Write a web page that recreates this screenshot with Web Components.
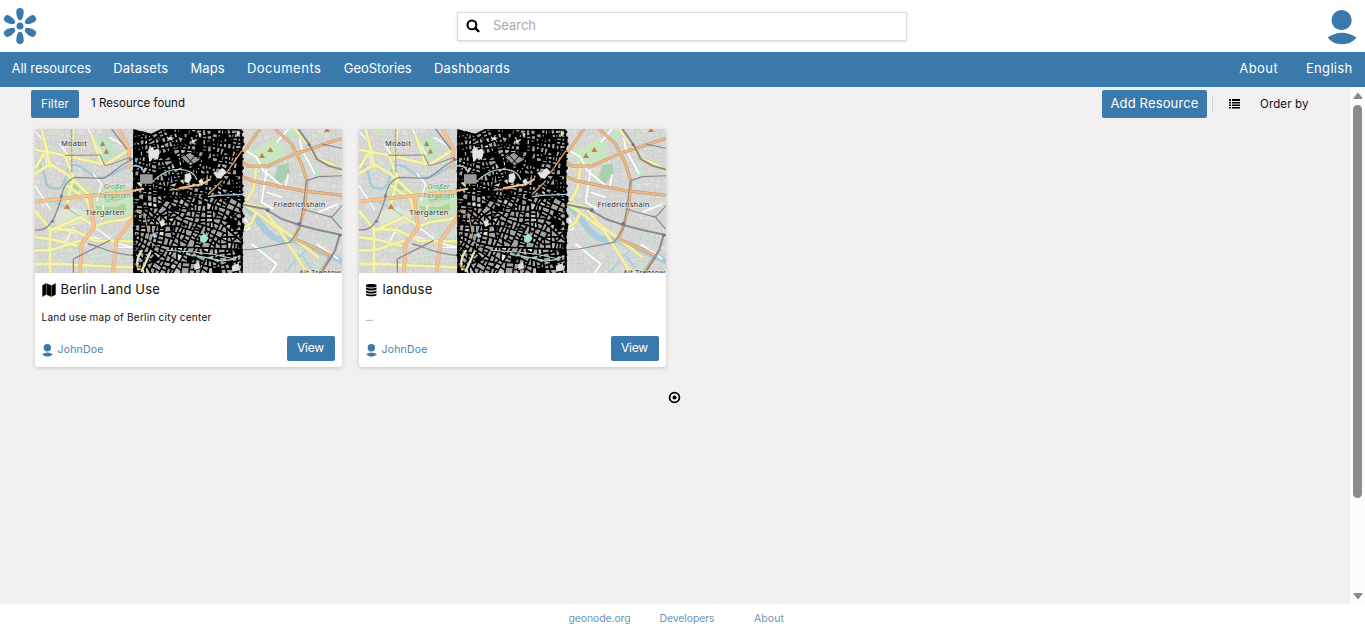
<!DOCTYPE html>
<html lang="en">
<head>
<meta charset="utf-8">
<title>GeoNode</title>
<style>
html,body{margin:0;height:100%;overflow:hidden;background:#fff}
body{font-family:Inter,"Open Sans",sans-serif;font-size:13px;color:#111}
</style>
</head>
<body>
<geo-app></geo-app>
<script>
const define = (name, html, setup) => {
  const t = document.createElement('template');
  t.innerHTML = html;
  customElements.define(name, class extends HTMLElement {
    constructor() {
      super();
      this.attachShadow({mode: 'open'}).append(t.content.cloneNode(true));
    }
    connectedCallback() { if (setup) setup(this, this.shadowRoot); }
  });
};

/* One-line label of a given width: tracking is spread evenly over its letters. */
define('fit-text', `<style>
:host{display:inline-block;white-space:nowrap;overflow:visible;line-height:1.2}
span{display:inline-block}
</style><span><slot></slot></span>`, (el, root) => {
  const w = +el.getAttribute('w'), s = root.querySelector('span');
  el.style.width = w + 'px';
  s.style.letterSpacing = '0px';
  const n = el.textContent.length;
  s.style.letterSpacing = ((w - s.getBoundingClientRect().width) / n) + 'px';
});

define('user-icon', `<style>:host{display:block}svg{display:block;width:100%;height:100%}</style>
<svg viewBox="0 0 30 35" fill="#3a79ab"><circle cx="14.6" cy="10.2" r="10.1"/><path d="M.6 27.6Q14.800 17.800 29.600 27.600Q24.500 34.300 15 34.300Q5.500 34.300 .6 27.600Z"/></svg>`);

define('geo-logo', `<style>:host{display:block;width:36px;height:38px}svg{display:block}</style>
<svg width="36" height="38" viewBox="-18 -19 36 38" fill="#3a79ab"><circle r="3.5"/>
<path id="a" d="M0-5.800C-2.600-5.800-3.700-11-3.700-14.300A3.700 3.700 0 0 1 3.700-14.300C3.700-11 2.600-5.800 0-5.800Z"/>
<use href="#a" transform="rotate(60)"/><use href="#a" transform="rotate(120)"/><use href="#a" transform="rotate(180)"/><use href="#a" transform="rotate(240)"/><use href="#a" transform="rotate(300)"/></svg>`);

define('search-box', `<style>
:host{display:flex;align-items:center;box-sizing:border-box;width:450px;height:29px;background:#fff;border:1px solid #dadada;box-shadow:0 1px 3px rgba(0,0,0,.12);padding-left:8px;color:#a9a9a9;font-size:13px}
svg{width:14px;height:14px;margin-right:13px}
</style><svg viewBox="0 0 14 14" fill="none" stroke="#000"><circle cx="5.900" cy="5.900" r="4.400" stroke-width="2.100"/><path d="M9.300 9.200l3 3" stroke-width="2.500" stroke-linecap="round"/></svg>
<fit-text w="43">Search</fit-text>`);

define('top-bar', `<style>
:host{display:flex;align-items:center;justify-content:space-between;height:52px;background:#fff;padding:0 8px 0 2px}
user-icon{width:30px;height:35px;margin-top:2px}
.l,.r{flex:1}.r{display:flex;justify-content:flex-end}
.l{padding-right:5px}
</style><div class="l"><geo-logo></geo-logo></div><search-box></search-box><div class="r"><user-icon></user-icon></div>`);

define('nav-bar', `<style>
:host{display:flex;align-items:center;height:35px;background:#3a79ab;color:#fff;padding:0 12.500px 1px 11.500px;box-sizing:border-box;gap:22.300px;font-size:13px}
.s{flex:1}.e{margin-left:5.500px}
</style><fit-text w="79.500">All resources</fit-text><fit-text w="55">Datasets</fit-text><fit-text w="34">Maps</fit-text><fit-text w="74.500">Documents</fit-text><fit-text w="68">GeoStories</fit-text><fit-text w="76">Dashboards</fit-text><span class="s"></span><fit-text w="39">About</fit-text><fit-text class="e" w="46.500">English</fit-text>`);

define('geo-button', `<style>
:host{display:flex;align-items:center;justify-content:center;background:#3a79ab;color:#fff;border-radius:2px;box-sizing:border-box;height:28px}
</style><slot></slot>`);

define('tool-bar', `<style>
:host{display:flex;align-items:center;padding:3px 41.500px 0 31px;height:28px;font-size:11.500px}
.f{width:48px}.f fit-text,.o{margin-top:1px}.n{margin:-1px 0 0 12px}.s{flex:1}
.a{width:105px;font-size:13px}.d{width:1px;height:18px;background:#d8d6d7;margin:0 16px 0 5px}
svg{margin-right:20px}
</style><geo-button class="f"><fit-text w="28">Filter</fit-text></geo-button><fit-text class="n" w="94">1 Resource found</fit-text><span class="s"></span>
<geo-button class="a"><fit-text w="88">Add Resource</fit-text></geo-button><span class="d"></span>
<svg width="11" height="10" viewBox="0 0 11 10" fill="#000"><path d="M0 0h2v2H0zM3 0h8v2H3zM0 3h2v1.500H0zM3 3h8v1.500H3zM0 5.500h2V7H0zM3 5.500h8V7H3zM0 8h2v1.500H0zM3 8h8v1.500H3z"/></svg>
<fit-text class="o" w="48.500">Order by</fit-text>`);

/* Berlin map thumbnail: drawn roads and parks, generated street blocks. */
define('berlin-map', `<style>:host{display:block;height:144px;overflow:hidden}svg{display:block;font-family:"Noto Sans",sans-serif}</style>
<svg width="308" height="144" viewBox="0 0 308 144">
<rect width="308" height="144" fill="#dadad8"/><g id="blocks"></g>
<g transform="translate(-5 -5) scale(.33333)" fill="none" stroke-linejoin="round" stroke-linecap="round">
 <g fill="#c9e3bd"><path d="M95 172L135 165L185 200L300 190L320 225L306 270L230 285L185 275L165 220L110 238L95 220Z"/><path d="M190 45L238 40L258 88L225 110L205 95Z" fill="#bee4c5"/><path d="M75 262L130 250L175 268L165 300L80 308Z" fill="#dfe6d2"/><path d="M60 15l36 0 0 18-36 0Z" fill="#cfe2c8"/></g>
 <g fill="#afd4a4"><path d="M108 188l22-16 20 22-18 14zM215 212l65-8 10 20-60 12zM195 246l60 4 30-12 5 20-80 14z"/></g>
 <g fill="#bce6ca"><path d="M205 52h10v10h-10zM222 72h12v10h-12zM232 54h9v10h-9zM212 86h9v9h-9z"/><path d="M100 130h12v10h-12zM28 340h14v10h-14zM60 415h16v12h-16zM105 355h10v12h-10zM250 320h12v10h-12zM55 232h10v16h-10zM268 108h14v12h-14zM215 380h12v12h-12z"/></g>
 <g stroke="#a5c9d6" stroke-width="7"><path d="M20 115C60 150 35 180 60 190S100 195 110 150S150 125 175 145S220 165 250 150S290 120 310 125"/><path d="M75 235C100 240 130 265 180 300" stroke-width="3.500"/></g>
 <g stroke="#fff" stroke-width="4"><path d="M18 25L45 55L50 120M175 15l40 75M190 150l25 30-15 50M15 185L60 255M240 40l50 30M220 245l-5 40M260 370h60M190 305l70 55M130 310l-35 65M90 60l35 50M110 320l200 50"/></g>
 <g stroke="#cbcba2" stroke-width="11"><path id="y" d="M15 77L120 97L215 120M35 15L50 75 60 130M15 150L60 120L110 150L180 215M50 75L18 130M105 95L130 160L110 245M15 260L60 315L130 318L195 350L310 352M60 315L60 445M15 340L60 345M15 420L80 420L180 425L310 430M65 378L150 350M185 275L170 225L110 185M200 305C250 280 280 300 320 270M60 320L150 280L195 305M130 15L125 90M60 345L140 365M230 120L300 75M185 35L215 120M15 380L65 378"/></g>
 <use href="#y" stroke="#f5f3a6" stroke-width="8.500"/>
 <g stroke="#d6a97d" stroke-width="11"><path d="M15 233L180 215L310 202L360 195L480 183M180 215L192 310L155 360L150 445M265 15L298 75L295 130M320 265L260 350L248 445"/></g>
 <g stroke="#f7c391" stroke-width="8"><path d="M15 233L180 215L310 202L360 195L480 183M180 215L192 310L155 360L150 445M265 15L298 75L295 130M320 265L260 350L248 445"/></g>
 <g stroke="#8b8b8d" stroke-width="4"><path d="M15 318C50 320 62 300 70 285S95 225 96 210S110 168 135 160L220 163C250 150 270 120 310 105L325 100"/><path d="M125 15V150" stroke-width="5" stroke="#aaa" stroke-dasharray="9 6"/><path d="M130 445V405L238 350M175 360C210 365 220 385 310 395M245 15L290 75"/><path d="M105 94L210 93L225 125L245 120L300 100" stroke="#8d8a68" stroke-width="3"/></g>
 <g fill="#7a80ad"><circle cx="94" cy="216" r="5"/><circle cx="67" cy="292" r="5"/><circle cx="302" cy="106" r="5"/></g>
 <g fill="#cf7c3f"><path d="M218 50l8 16h-16zM229 73l8 16h-16zM111 238l9 17h-18z"/></g>
</g>
<g transform="translate(150 -5) scale(.33333)" fill="none" stroke-linejoin="round">
 <path d="M185 85L225 68L272 42L290 60L296 98L275 112L215 122Z" fill="#c7e7bf"/><path d="M280 125L310 118L315 150L290 178L268 165Z" fill="#a8cfae"/>
 <g fill="#bce6ca"><path d="M380 130h25v22h-25zM355 40h13v18h-13zM400 335h12v15h-12zM425 340h14v14h-14zM368 355h12v14h-12zM395 420h18v20h-18zM225 380h14v14h-14zM445 375h14v16h-14zM230 340h10v12h-10zM310 20h18v30h-18zM450 275h13v15h-13z"/></g>
 <path d="M150 215Q190 250 230 305T320 345L400 380L490 420" stroke="#a9ccdc" stroke-width="19"/><path d="M300 445L360 380L390 365M325 400L350 395L385 440" stroke="#a9d3dc" stroke-width="6"/>
 <g stroke="#fff" stroke-width="5"><path d="M175 75L215 100L235 140L290 185M245 135L230 235L265 255M340 15L350 75L390 150M245 205L290 220M200 360L275 420L255 450M275 55L310 15M180 285Q210 325 170 315M395 360L460 405M300 195L310 150M460 240L400 265"/></g>
 <g stroke="#c9c9a7" stroke-width="12"><path id="z" d="M165 235L210 262L285 320L365 445M195 130L215 125L205 195L185 230M215 260L200 295L160 325M330 15L370 65L395 105L440 120L480 150M160 235L230 250L270 300L330 345L400 400"/></g>
 <use href="#z" stroke="#f3f0a5" stroke-width="9"/>
 <g stroke="#bf9263" stroke-width="9"><path id="w" d="M165 110L190 127L250 125L330 90L480 40M270 15L320 60L350 120L365 170L360 250L330 345L440 395L405 445M165 155L200 170L350 200L480 215M225 15L175 85"/></g>
 <use href="#w" stroke="#eeb984" stroke-width="6"/>
 <g stroke="#8b8b8d"><path d="M165 240L240 255L290 285L340 302L400 318L480 335M340 15L375 65L395 105L430 125L480 140M465 330L450 380L410 445" stroke-width="6"/><path d="M165 378L210 375L315 355L345 310L365 170L400 158L480 155M410 60L480 75M480 235L440 280L350 255M470 315L435 275" stroke-width="3.500"/></g>
 <g fill="#6f72aa"><circle cx="248" cy="259" r="6"/><circle cx="342" cy="300" r="6"/><circle cx="464" cy="334" r="5"/><circle cx="372" cy="62" r="5"/></g>
 <g fill="#cf7c3f"><path d="M256 69l9 15h-18zM231 86l9 16h-18zM426 10l9 14h-18z"/></g>
</g>
<g id="land"></g>
<g transform="translate(95 -3) scale(.33333)" fill="none" stroke-linecap="round">
 <path d="M55 70l12-8 6 10 12-5 4 14-6 20-14-4-10 12-4-18zM165 145l15-5 5 14-8 18-14-4zM250 140l28-14 12 12-18 20-12-2zM205 165l10-8 8 14-10 10z" fill="#e5e3e2"/>
 <path d="M110 38l14-8 4 14zM205 18l10 6-8 10zM150 165l10-5 2 15zM20 170l15-3v18zM185 38l12 8-10 8zM320 12l10 10-10 12z" fill="#d5ebbb"/>
 <path d="M30 145h38v28H30z" fill="#999"/>
 <path d="M152 93l28-14 32 22-30 18z" fill="#999" stroke="#000" stroke-width="3"/><path d="M165 87l25 27M195 90l-20 22" stroke="#000" stroke-width="3"/>
 <path d="M5 120Q35 115 42 140M75 160Q110 128 150 130T200 160M235 212L260 208L340 205" stroke="#a9cede" stroke-width="4"/>
 <path d="M0 196L40 188M150 186L215 175L240 160" stroke="#f6c48f" stroke-width="6"/><path d="M120 192l50-6M235 205l40-40M290 140l45-65" stroke="#d89e64" stroke-width="4"/>
 <circle cx="263" cy="135" r="5" fill="#8c93c4"/>
 <path d="M15 255L45 270L60 345L85 368" stroke="#d09a68" stroke-width="3"/>
 <path d="M110 373L190 378L250 385L310 398L330 390" stroke="#cbd7b2" stroke-width="3"/><path d="M170 385L230 395L275 405L310 400" stroke="#a9d3dc" stroke-width="4"/>
 <path d="M210 332l14-10 12 14-8 12-16 2z" fill="#a3e5c6"/><path d="M87 286l13-4 6 14-12 7z" fill="#e4e9c5"/>
 <path d="M35 375Q15 400 25 430M60 380L35 435" stroke="#dce9bd" stroke-width="7"/><path d="M65 325l8-6 10 12-10 6z" fill="#a4c8e0"/><circle cx="26" cy="424" r="5" fill="#c96d2c"/>
 <path d="M305 420l20-8 6 20-24 5zM193 415l14-8 4 20-18 5z" fill="#ddd"/>
</g>
<g font-size="7.500" fill="#333" stroke="#eee" stroke-opacity=".65" stroke-width="1.400" paint-order="stroke">
 <text x="26" y="16.500" textLength="26">Moabit</text><text x="50.500" y="86" textLength="39">Tiergarten</text><text x="238.500" y="77.500" textLength="52">Friedrichshain</text><text x="264" y="146" textLength="42">Alt-Treptow</text>
 <g fill="#4f9f58" font-size="7" font-style="italic"><text x="68.500" y="60" textLength="22">Großer</text><text x="63.500" y="68.500" textLength="32">Tiergarten</text></g>
</g>
</svg>`, (el, root) => {
  let seed = 7321;
  const rnd = () => (seed = (seed * 16807) % 2147483647) / 2147483647;
  const area = p => Math.abs(p.reduce((s, a, i) => { const b = p[(i + 1) % p.length]; return s + a[0] * b[1] - b[0] * a[1]; }, 0)) / 2;
  const cut = (p, c, n) => {
    const A = [], B = [];
    p.forEach((a, i) => {
      const b = p[(i + 1) % p.length];
      const da = (a[0] - c[0]) * n[0] + (a[1] - c[1]) * n[1], db = (b[0] - c[0]) * n[0] + (b[1] - c[1]) * n[1];
      (da >= 0 ? A : B).push(a);
      if (da * db < 0) { const t = da / (da - db), m = [a[0] + (b[0] - a[0]) * t, a[1] + (b[1] - a[1]) * t]; A.push(m); B.push(m); }
    });
    return [A, B];
  };
  const split = (p, limit, jitter, out) => {
    const s = area(p);
    if (s < limit(p) * (0.6 + rnd()) || p.length < 3) { out.push(p); return; }
    let L = 0, d = [1, 0];
    p.forEach((a, i) => { const b = p[(i + 1) % p.length], l = Math.hypot(b[0] - a[0], b[1] - a[1]); if (l > L) { L = l; d = [(b[0] - a[0]) / l, (b[1] - a[1]) / l]; } });
    const g = (rnd() - .5) * (s > 600 ? 1.1 : jitter), n = [d[0] * Math.cos(g) - d[1] * Math.sin(g), d[0] * Math.sin(g) + d[1] * Math.cos(g)];
    const c = p.reduce((q, a) => [q[0] + a[0] / p.length, q[1] + a[1] / p.length], [0, 0]);
    const sh = (rnd() - .5) * Math.sqrt(s) * .25;
    for (const q of cut(p, [c[0] + n[0] * sh, c[1] + n[1] * sh], n)) split(q, limit, jitter, out);
  };
  const path = p => 'M' + p.map(a => a[0].toFixed(1) + ' ' + a[1].toFixed(1)).join('L') + 'Z';
  const draw = (id, h) => { root.getElementById(id).innerHTML = h; };
  let o = [];
  split([[0, 0], [308, 0], [308, 144], [0, 144]], () => 40, .2, o);
  draw('blocks', o.map(p => `<path d="${path(p)}" fill="${rnd() < .05 ? '#cfe6cc' : rnd() < .2 ? '#e0dedc' : '#d9d9d8'}" stroke="#cacaca" stroke-width=".5"/>`).join(''));
  o = [];
  split([[99, 1], [116, 6], [128, 0], [206, 1], [207, 145], [99, 145]], p => p[0][1] > 72 ? 36 : 25, .4, o);
  let h = o.map(p => { const r = rnd(), top = p[0][1] < 72; return `<path d="${path(p)}" fill="${r < (top ? .2 : .05) ? '#000' : r > .975 ? '#d8e8d4' : r > .88 ? '#c4c4c4' : '#a2a2a2'}" stroke="#000" stroke-width="${(1.2 + rnd() * (top ? 1.1 : .6)).toFixed(1)}"/>`; }).join('');
  for (let y = 3; y < 144; y += 3) h += `<circle cx="${99 + rnd() * 3}" cy="${y}" r="${.8 + rnd() * 1.3}"/><circle cx="${205 + rnd() * 3}" cy="${y}" r="${.8 + rnd() * 1.4}"/>`;
  for (let i = 0; i < 70; i++) h += `<circle cx="${101 + rnd() * 105}" cy="${5 + rnd() * 137}" r="${.6 + rnd() * 1.2}"/>`;
  draw('land', h);
});

define('resource-card', `<style>
:host{display:flex;flex-direction:column;width:307.500px;height:237.500px;background:#fff;border-radius:3px;overflow:hidden;box-shadow:0 1px 4px rgba(0,0,0,.18);color:#111}
.t{display:flex;align-items:center;height:33px;padding-left:7px;font-size:13px}
.d{height:22px;padding:0 7px 1px;font-size:10px;display:flex;align-items:center}
.b{display:flex;align-items:center;height:25px;padding:7px 7.500px 0;color:#4b83ae;font-size:10.500px}
user-icon{width:11px;height:13px;margin-right:4.500px;margin-top:4px}
.s{flex:1}geo-button{width:48px;height:25px;font-size:12px}
</style><berlin-map></berlin-map><div class="t"><slot name="icon"></slot><slot name="title"></slot></div><div class="d"><slot name="text"></slot></div>
<div class="b"><user-icon></user-icon><fit-text w="46" style="margin-top:3px">JohnDoe</fit-text><span class="s"></span><geo-button><fit-text w="27">View</fit-text></geo-button></div>`);

define('scroll-bar', `<style>
:host{display:flex;flex-direction:column;align-items:center;width:15px;background:#fcfcfc;box-sizing:border-box;padding:5px 0 4px}
i{width:9px;height:393px;border-radius:5px;background:#8b8b8b;margin:6px 0 auto}
svg{display:block}
</style><svg width="10" height="7"><path d="M5 .5L9.500 6Q9.500 7 8.500 7H1.500Q.5 7 .5 6Z" fill="#8b8b8b"/></svg><i></i><svg width="10" height="7"><path d="M5 6.500L9.500 1Q9.500 0 8.500 0H1.500Q.5 0 .5 1Z" fill="#8b8b8b"/></svg>`);

define('page-footer', `<style>
:host{display:flex;align-items:center;height:26px;padding:4px 0 0 568.500px;box-sizing:border-box;background:#fff;color:#6f94b3;font-size:10.500px}
.a{margin-left:29px}.b{margin-left:39.500px}
</style><fit-text w="62">geonode.org</fit-text><fit-text class="a" w="55">Developers</fit-text><fit-text class="b" w="30">About</fit-text>`);

define('geo-app', `<style>
:host{display:flex;flex-direction:column;height:630px;width:1365px}
main{display:flex;flex:1;min-height:0;background:#f2f0f1}
.c{flex:1}
.g{display:flex;gap:16.500px;padding:11px 35px 0;margin-left:-.5px}
.ic{display:block;margin-right:5px}
.o{display:block;margin:24.500px auto 0;position:relative;left:-.5px}
</style><top-bar></top-bar><nav-bar></nav-bar>
<main><div class="c"><tool-bar></tool-bar><div class="g">
<resource-card><svg slot="icon" class="ic" width="14" height="14" viewBox="0 0 14 14"><path d="M.5 2.500L4 .5V11.500L.5 13.500ZM4.700 .5L9 2.500V13.500L4.700 11.500ZM9.700 2.500L13.500 .5V11.500L9.700 13.500Z" stroke="#000" stroke-width=".4"/></svg><fit-text slot="title" w="99.500">Berlin Land Use</fit-text><fit-text slot="text" w="170">Land use map of Berlin city center</fit-text></resource-card>
<resource-card><svg slot="icon" class="ic" style="margin-right:5px;margin-left:-.5px" width="12.500" height="14" viewBox="0 0 13 14"><path d="M1 2C1 .2 12 .2 12 2V3C12 4.800 1 4.800 1 3ZM1 4.500Q6.500 6.500 12 4.500V6.200C12 8 1 8 1 6.200ZM1 7.700Q6.500 9.700 12 7.700V9.300C12 11.100 1 11.100 1 9.300ZM1 10.800Q6.500 12.800 12 10.800V12.200C12 14 1 14 1 12.200Z"/></svg><fit-text slot="title" w="50">landuse</fit-text><fit-text slot="text" w="7" style="color:#8a552c">...</fit-text></resource-card>
</div><svg class="o" width="13" height="13" viewBox="0 0 13 13"><circle cx="6.500" cy="6.500" r="4.900" fill="none" stroke="#000" stroke-width="1.800"/><circle cx="6.500" cy="6.500" r="2"/></svg></div><scroll-bar></scroll-bar></main><page-footer></page-footer>`);
</script>
</body>
</html>
